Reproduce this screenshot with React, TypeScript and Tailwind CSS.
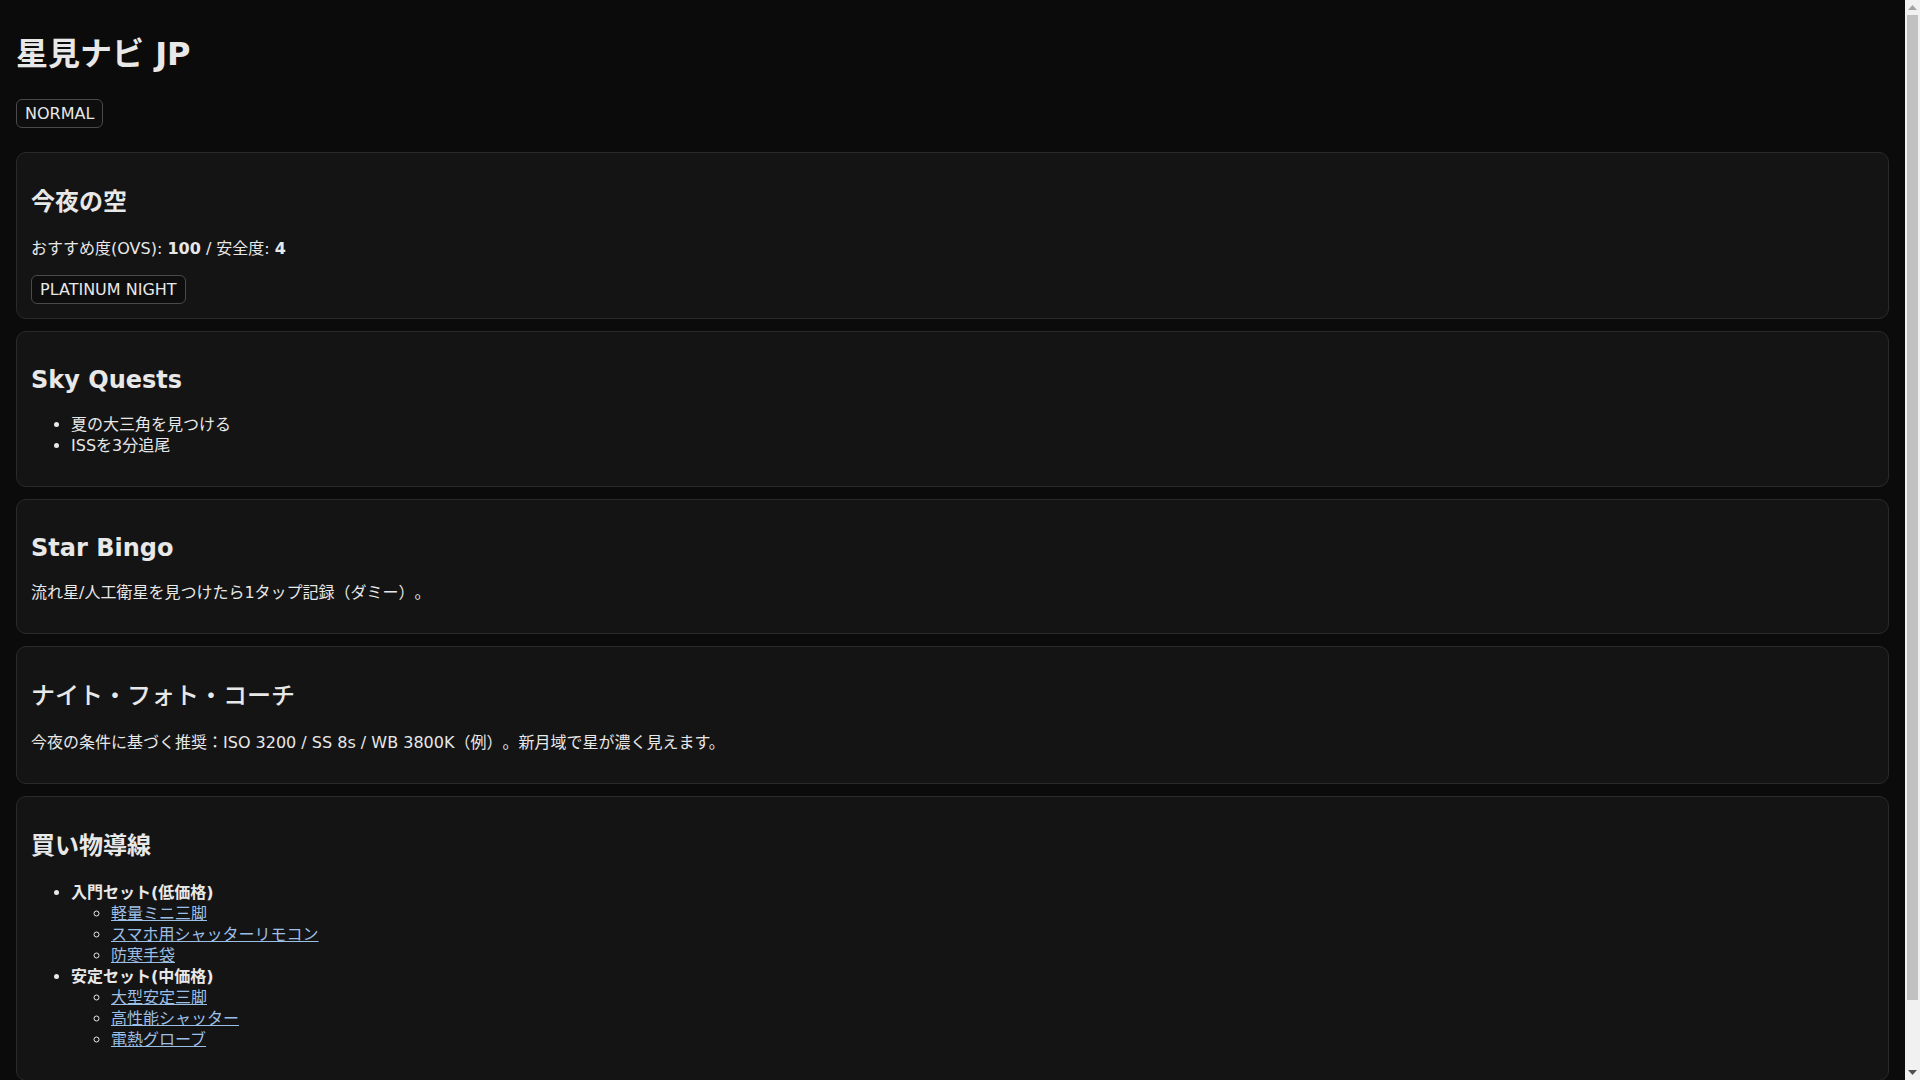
import React from "react";

function Badge({ children }: { children: React.ReactNode }) {
    return (
        <span className="inline-block border border-[#4a4a4a] rounded-md px-2 py-1 leading-[19px] bg-[#0e0e0e]">
            {children}
        </span>
    );
}

// latin-only titles get the shorter line box, CJK titles the taller one
function Card({
    title,
    latin = false,
    weight = "font-bold",
    children,
}: {
    title: string;
    latin?: boolean;
    weight?: string;
    children: React.ReactNode;
}) {
    return (
        <section className="border border-[#2a2a2a] bg-[#141414] rounded-[10px] p-[14px]">
            <h2 className={`text-2xl my-[20px] ${weight} ${latin ? "leading-[28px]" : "leading-[31px]"}`}>
                {title}
            </h2>
            {children}
        </section>
    );
}

// page scrollbar as it appears in the screenshot
function ScrollBar() {
    return (
        <aside className="w-[15px] shrink-0 bg-[#f1f1f1] flex flex-col">
            <div className="h-[15px] flex items-center justify-center">
                <svg width="9" height="5" viewBox="0 0 9 5">
                    <polygon points="4.5,0 9,5 0,5" fill="#a3a3a3" />
                </svg>
            </div>
            <div className="h-[985px] mx-[2px] bg-[#c1c1c1]" />
            <div className="flex-1" />
            <div className="h-[15px] flex items-center justify-center">
                <svg width="9" height="5" viewBox="0 0 9 5">
                    <polygon points="0,0 9,0 4.5,5" fill="#505050" />
                </svg>
            </div>
        </aside>
    );
}

const shopping = [
    {
        name: "入門セット(低価格)",
        items: ["軽量ミニ三脚", "スマホ用シャッターリモコン", "防寒手袋"],
    },
    {
        name: "安定セット(中価格)",
        items: ["大型安定三脚", "高性能シャッター", "電熱グローブ"],
    },
];

export default function App() {
    return (
        <div className="h-screen flex overflow-hidden bg-[#0b0b0b] text-[#e8e8e8] text-base leading-[21px] [text-spacing-trim:space-all] font-['DejaVu_Sans','Noto_Sans_CJK_JP',sans-serif]">
            <main className="flex-1 min-w-0 p-4">
                <h1 className="text-[32px] font-bold leading-[41px] mt-[18px] mb-[24px]">星見ナビ JP</h1>
                <div className="mb-6">
                    <Badge>NORMAL</Badge>
                </div>

                <div className="flex flex-col gap-3">
                    <Card title="今夜の空">
                        <p className="my-4">
                            おすすめ度(OVS): <strong>100</strong> / 安全度: <strong>4</strong>
                        </p>
                        <div>
                            <Badge>PLATINUM NIGHT</Badge>
                        </div>
                    </Card>

                    <Card title="Sky Quests" latin>
                        <ul className="my-4 pl-10 list-disc">
                            <li>夏の大三角を見つける</li>
                            <li>ISSを3分追尾</li>
                        </ul>
                    </Card>

                    <Card title="Star Bingo" latin>
                        <p className="my-4">流れ星/人工衛星を見つけたら1タップ記録（ダミー）。</p>
                    </Card>

                    <Card title="ナイト・フォト・コーチ" weight="font-medium">
                        <p className="my-4">
                            今夜の条件に基づく推奨：ISO 3200 / SS 8s / WB 3800K（例）。新月域で星が濃く見えます。
                        </p>
                    </Card>

                    <Card title="買い物導線">
                        <ul className="my-4 pl-10 list-disc">
                            {shopping.map((set) => (
                                <li key={set.name}>
                                    <strong>{set.name}</strong>
                                    <ul className="pl-10 list-[circle]">
                                        {set.items.map((item) => (
                                            <li key={item}>
                                                <a href="#" className="underline text-[#9cbfe6]">
                                                    {item}
                                                </a>
                                            </li>
                                        ))}
                                    </ul>
                                </li>
                            ))}
                        </ul>
                    </Card>
                </div>
            </main>
            <ScrollBar />
        </div>
    );
}
